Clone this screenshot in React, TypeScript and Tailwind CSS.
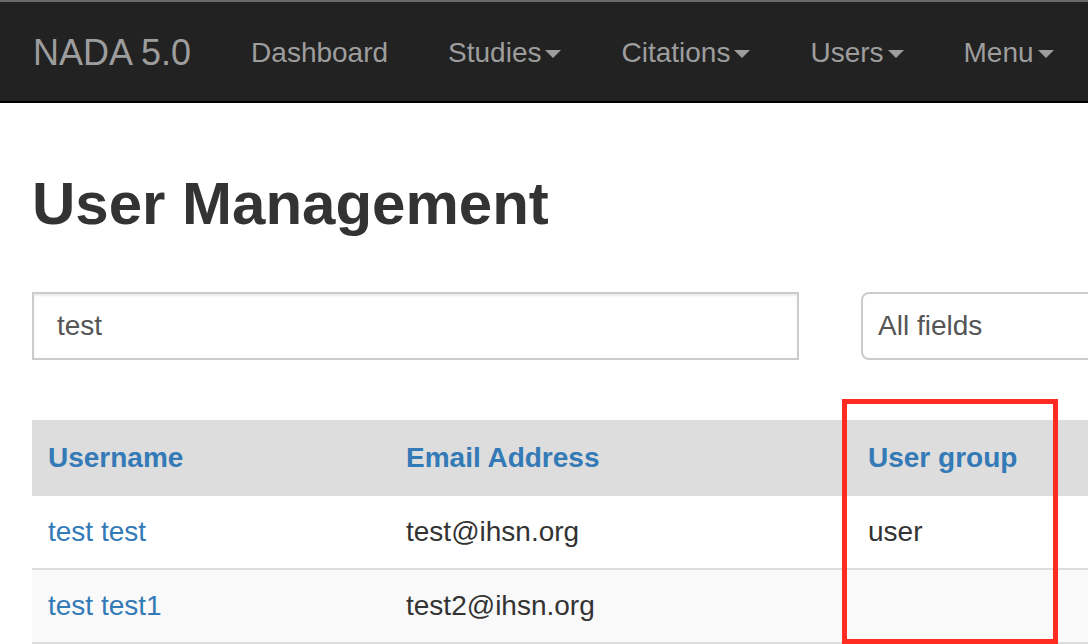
import React from 'react';

const navItems = [
  { label: 'Dashboard', caret: false },
  { label: 'Studies', caret: true },
  { label: 'Citations', caret: true },
  { label: 'Users', caret: true },
  { label: 'Menu', caret: true },
];

const users = [
  { name: 'test test', email: 'test@ihsn.org', group: 'user' },
  { name: 'test test1', email: 'test2@ihsn.org', group: '' },
];

function Caret() {
  return (
    <span className="inline-block w-0 h-0 ml-[4px] align-middle border-t-[8px] border-x-[8px] border-x-transparent border-t-[#9d9d9d]" />
  );
}

export default function App() {
  return (
    <div className="relative w-[1088px] h-[644px] overflow-hidden bg-white font-['Liberation_Sans',Arial,sans-serif] text-[#333]">
      {/* top navbar */}
      <nav className="flex items-center h-[103px] bg-[#222] border-t-[2px] border-t-[#6a6a6a] border-b-[2px] border-b-black">
        <a className="pl-[33px] pr-[30px] pt-[2px] text-[36px] leading-none text-[#9d9d9d]">NADA 5.0</a>
        <ul className="flex items-center pt-[2px]">
          {navItems.map((item) => (
            <li key={item.label} className="px-[30px] text-[28px] leading-none text-[#9d9d9d] whitespace-nowrap">
              {item.label}
              {item.caret && <Caret />}
            </li>
          ))}
        </ul>
      </nav>

      <div className="pl-[32px]">
        <h1 className="mt-[68px] text-[60px] font-bold leading-[1.1] text-[#333]">User Management</h1>

        <div className="flex mt-[55px]">
          <div className="w-[767px] shrink-0 h-[68px] flex items-center border-2 border-[#ccc] px-[23px] text-[28px] text-[#555] shadow-[inset_0_2px_2px_rgba(0,0,0,0.075)]">
            test
          </div>
          <div className="ml-[62px] w-[300px] shrink-0 h-[68px] flex items-center border-2 border-[#ccc] rounded-[8px] pl-[15px] text-[28px] text-[#555]">
            All fields
          </div>
        </div>

        <div className="mt-[60px] w-[1200px]">
          <div className="grid grid-cols-[358px_462px_380px] h-[76px] items-center bg-[#ddd] text-[28px] font-bold text-[#337ab7]">
            <div className="pl-[16px]">Username</div>
            <div className="pl-[16px]">Email Address</div>
            <div className="pl-[16px]">User group</div>
          </div>
          {users.map((u, i) => (
            <div
              key={u.email}
              className={`grid grid-cols-[358px_462px_380px] items-center text-[28px] ${
                i % 2 === 1 ? 'bg-[#f9f9f9] border-y-2 border-[#ddd] h-[76px]' : 'bg-white h-[72px]'
              }`}
            >
              <div className="pl-[16px] text-[#337ab7]">{u.name}</div>
              <div className="pl-[16px]">{u.email}</div>
              <div className="pl-[16px]">{u.group}</div>
            </div>
          ))}
        </div>
      </div>

      {/* highlight box */}
      <div className="absolute left-[842px] top-[399px] w-[216px] h-[245px] border-[5px] border-[#ff2d21]" />
    </div>
  );
}
